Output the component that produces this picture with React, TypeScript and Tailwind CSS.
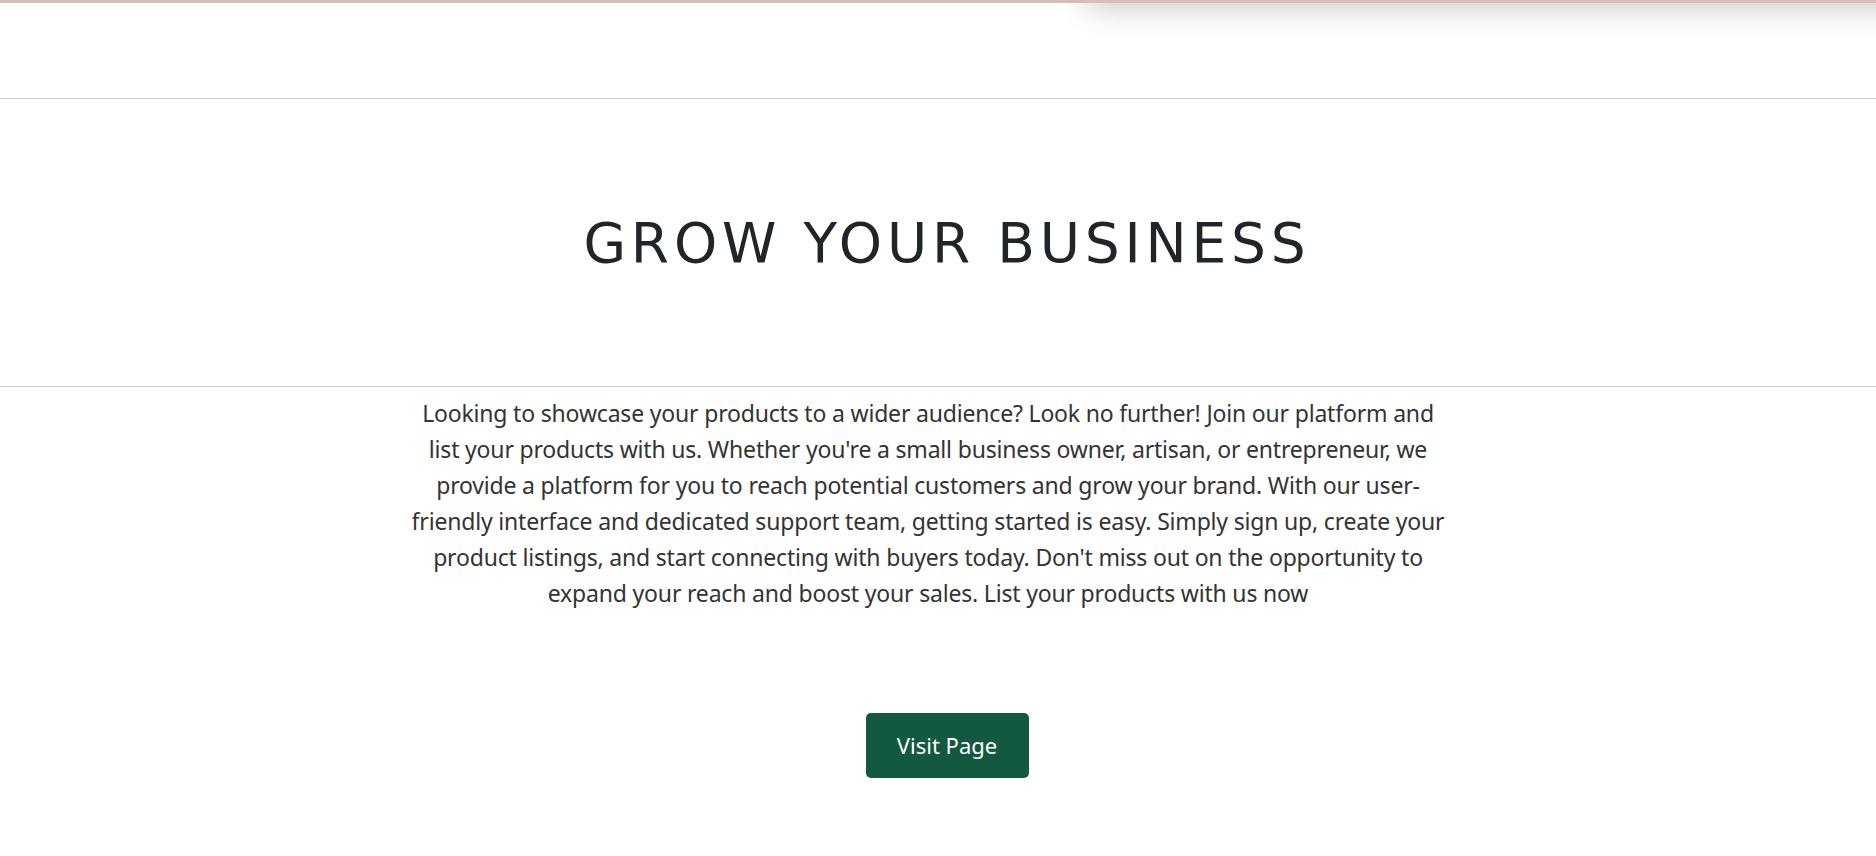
import React from "react";

const lines = [
  "Looking to showcase your products to a wider audience? Look no further! Join our platform and",
  "list your products with us. Whether you're a small business owner, artisan, or entrepreneur, we",
  "provide a platform for you to reach potential customers and grow your brand. With our user-",
  "friendly interface and dedicated support team, getting started is easy. Simply sign up, create your",
  "product listings, and start connecting with buyers today. Don't miss out on the opportunity to",
  "expand your reach and boost your sales. List your products with us now",
];

export default function App() {
  return (
    <div className="w-[1876px] h-[856px] bg-white overflow-hidden" style={{ fontFamily: '"Noto Sans", "Open Sans", sans-serif' }}>
      <div className="relative z-10 h-[3px] bg-[#dbbdb5]" />
      <header className="relative h-[96px] border-b border-[#cbcbcb]">
        <div className="absolute left-[1085px] right-[-30px] top-[-60px] h-[58px] rounded-b-[12px] bg-white shadow-[0_8px_30px_rgba(0,0,0,0.2)]" />
      </header>
      <section className="h-[288px] flex items-center justify-center border-b border-[#d0d0d0] pl-[18px]">
        <h1
          className="text-[55px] leading-none font-normal text-[#212529] tracking-[4.8px] pt-[2px]"
          style={{ fontFamily: '"DejaVu Sans", sans-serif' }}
        >
          GROW YOUR BUSINESS
        </h1>
      </section>
      <p className="mt-[8px] pr-[20px] text-center text-[23px] leading-[36px] text-[#333333] tracking-[-0.008em]">
        {lines.map((l, i) => (
          <span key={i} className="block">
            {l}
          </span>
        ))}
      </p>
      <div className="flex justify-center mt-[102px] pl-[18px]">
        <button className="h-[65px] w-[163px] rounded-[5px] bg-[#13593f] text-white text-[22px]">
          Visit Page
        </button>
      </div>
    </div>
  );
}
